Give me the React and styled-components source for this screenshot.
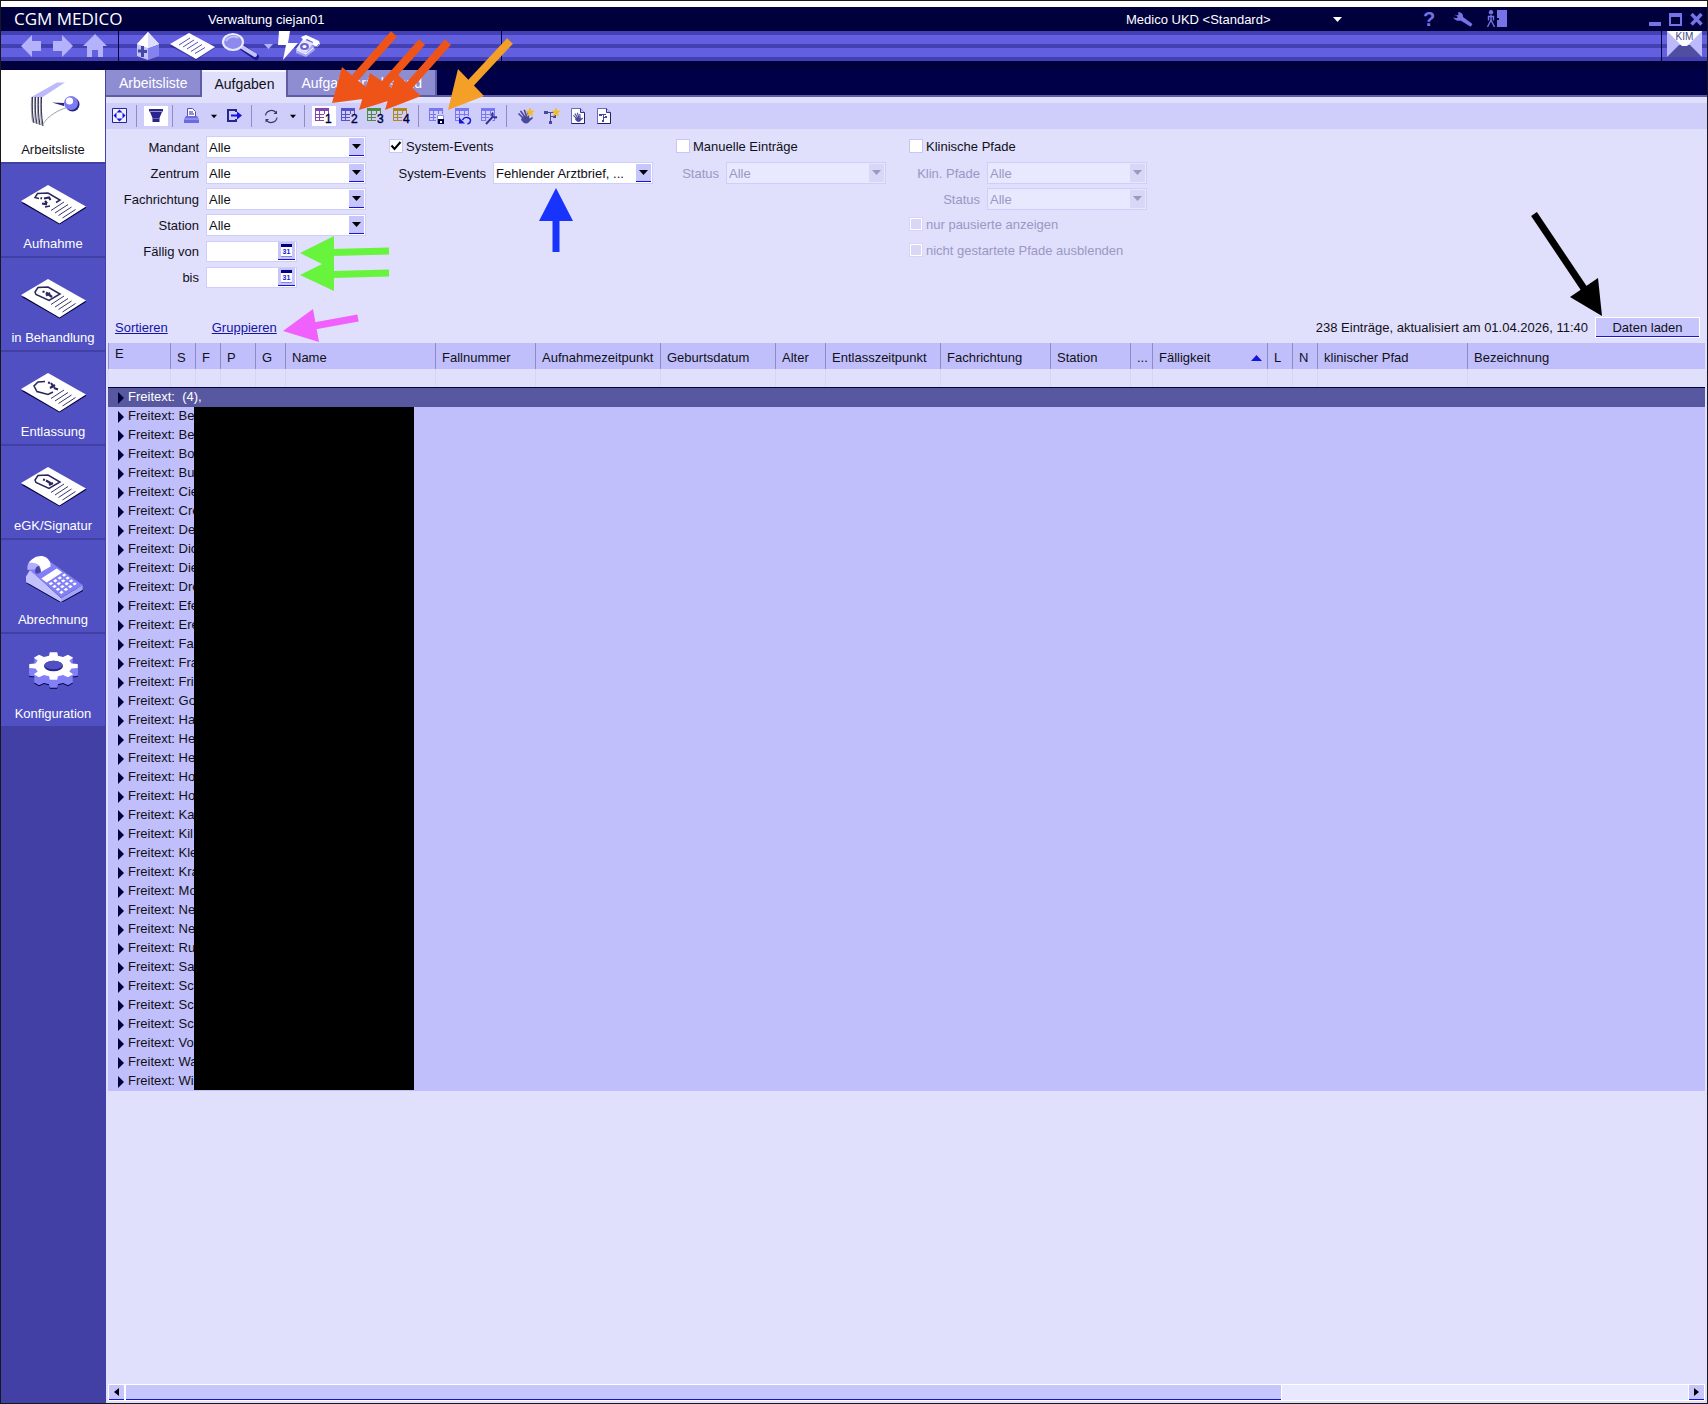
import React from "react";
import styled, { createGlobalStyle } from "styled-components";

const c = {
  frame: "#18181c",
  navy: "#00003c",
  navyTab: "#000048",
  stripeDark: "#4340b4",
  stripeLight: "#6260e0",
  side: "#5150c2",
  sideDark: "#4240a4",
  panel: "#e0dffc",
  bar: "#cfcefb",
  head: "#c0bffb",
  control: "#c7c6fc",
  selected: "#5858a0",
  tab: "#8f8dd2",
  tabEdge: "#5e5ca4",
  line: "#8f8dbe",
  faint: "#d6d5f8",
  muted: "#9a98c4",
  icon: "#7573e6",
  blue: "#1414dc",
  ink: "#101018",
};

const Global = createGlobalStyle`
  * { box-sizing: border-box; }
  body { margin: 0; background: ${c.frame}; }
  body, button, input, select {
    font-family: "Liberation Sans", Arial, sans-serif;
    font-size: 13px;
    color: ${c.ink};
  }
  button { border: 0; padding: 0; background: none; }
  svg { display: block; flex: none; }
`;

const Window = styled.div`
  position: relative;
  display: flex;
  flex-direction: column;
  height: 100vh;
  min-height: 1120px;
  border: 1px solid ${c.frame};
  background: ${c.panel};
  overflow: hidden;
`;

const TitleBar = styled.header`
  display: flex;
  align-items: center;
  height: 30px;
  padding-left: 13px;
  border-top: 6px solid #fff;
  background: ${c.navy};
  color: #fff;
  flex: none;
`;

const Brand = styled.span`
  width: 194px;
  font-family: "Open Sans", "Noto Sans", sans-serif;
  font-size: 17px;
  line-height: 24px;
`;

const User = styled.span`
  flex: 1;
`;

const Stack = styled.div`
  display: grid;
  width: ${(p) => p.$width}px;
  height: ${(p) => p.$height || 22}px;
  align-items: center;
  justify-items: end;
  & > * { grid-area: 1 / 1; }
`;

const ProfileSelect = styled.select`
  appearance: none;
  width: 100%;
  border: 0;
  padding: 0 2px;
  background: transparent;
  color: #fff;
`;

const IconGroup = styled.div`
  display: flex;
  margin-left: ${(p) => p.$space}px;
`;

const TitleButton = styled.button`
  display: flex;
  justify-content: center;
  align-items: center;
  width: ${(p) => p.$width}px;
  height: 24px;
  color: ${c.icon};
  font-size: 20px;
  font-weight: bold;
`;

const NavBar = styled.nav`
  display: flex;
  align-items: stretch;
  height: 30px;
  flex: none;
  background: linear-gradient(
    ${c.stripeDark} 4px, ${c.stripeLight} 4px 13px,
    ${c.stripeDark} 13px 17px, ${c.stripeLight} 17px 26px,
    ${c.stripeDark} 26px
  );
`;

const NavSection = styled.div`
  display: flex;
  gap: ${(p) => p.$gap || 0}px;
  width: ${(p) => p.$width}px;
  padding-left: ${(p) => p.$pad || 0}px;
  border-right: 1px solid ${c.navy};
`;

const NavButton = styled.button`
  display: flex;
  justify-content: center;
  width: ${(p) => p.$width}px;
`;

const NavFill = styled.div`
  flex: 1;
  border-right: 1px solid ${c.navy};
`;

const Body = styled.div`
  display: flex;
  flex: 1;
  min-height: 0;
  border-top: 9px solid ${c.navy};
`;

const Sidebar = styled.aside`
  width: 105px;
  flex: none;
  border-right: 1px solid ${c.sideDark};
  background: ${c.sideDark};
`;

const SideItem = styled.button`
  display: flex;
  flex-direction: column;
  align-items: center;
  gap: 10px;
  width: 104px;
  height: 92px;
  padding-top: 12px;
  margin-bottom: 2px;
  background: ${(p) => (p.$active ? "#fff" : c.side)};
  color: ${(p) => (p.$active ? c.ink : "#fff")};
  line-height: 16px;
`;

const Main = styled.main`
  display: flex;
  flex-direction: column;
  flex: 1;
  min-width: 0;
`;

const Tabs = styled.div`
  display: flex;
  height: 27px;
  flex: none;
  background: ${c.navyTab};
`;

const Tab = styled.button`
  height: 27px;
  padding: ${(p) => (p.$active ? "0 12px" : "2px 13px 0")};
  border-right: ${(p) => (p.$active ? 0 : 2)}px solid ${c.tabEdge};
  border-left: ${(p) => (p.$edge ? 2 : 0)}px solid ${c.tabEdge};
  border-bottom: ${(p) => (p.$active ? 0 : 2)}px solid ${c.tabEdge};
  border-top: ${(p) => (p.$active ? 2 : 0)}px solid #f4f4ff;
  background: ${(p) => (p.$active ? c.panel : c.tab)};
  color: ${(p) => (p.$active ? c.ink : "#fff")};
  font-size: 14px;
  line-height: 23px;
`;

const TabFill = styled.div`
  flex: 1;
  border-bottom: 2px solid ${c.tabEdge};
`;

const Toolbar = styled.div`
  display: flex;
  align-items: center;
  gap: 2px;
  height: 26px;
  margin-top: 6px;
  padding-left: 2px;
  background: ${c.bar};
  flex: none;
`;

const Tool = styled.button`
  display: flex;
  align-items: center;
  justify-content: center;
  width: ${(p) => (p.$narrow ? 15 : 24)}px;
  height: 20px;
  background: ${(p) => (p.$active ? "#fff" : "transparent")};
`;

const Divider = styled.span`
  width: 1px;
  height: 22px;
  margin: 0 5px 0 2px;
  background: ${c.line};
`;

const Filters = styled.form`
  display: flex;
  gap: 23px;
  padding: 7px 0 29px;
  flex: none;
`;

const FilterColumn = styled.fieldset`
  display: flex;
  flex-direction: column;
  gap: 4px;
  margin: 0;
  padding: 0;
  border: 0;
  min-width: 0;
`;

const Field = styled.div`
  display: flex;
  align-items: center;
  gap: 7px;
  height: 22px;
`;

const FieldLabel = styled.label`
  width: ${(p) => p.$width}px;
  text-align: right;
  white-space: nowrap;
  color: ${(p) => (p.$off ? c.muted : c.ink)};
`;

const SelectBox = styled.select`
  appearance: none;
  width: 100%;
  height: 22px;
  padding: 0 18px 0 2px;
  border: 1px solid ${c.bar};
  border-radius: 0;
  background: #fff;
  color: ${c.ink};
  opacity: 1;
  &:disabled {
    background: #e8e8fe;
    color: ${c.muted};
  }
`;

const Drop = styled.span`
  display: flex;
  align-items: center;
  justify-content: center;
  width: 15px;
  height: 18px;
  margin-right: 2px;
  pointer-events: none;
  background: ${(p) => (p.$off ? "#d8d7f6" : c.control)};
  color: ${(p) => (p.$off ? c.muted : "#000")};
  border-bottom: 1px solid ${(p) => (p.$off ? "#d8d7f6" : c.blue)};
`;

const DateInput = styled.input`
  width: 100%;
  height: 21px;
  padding: 0 20px 0 2px;
  border: 1px solid ${c.bar};
  background: #fff;
`;

const DateButton = styled.button`
  display: flex;
  justify-content: center;
  width: 17px;
  height: 18px;
  margin-right: 2px;
  background: ${c.control};
  border-bottom: 1px solid ${c.blue};
`;

const CheckRow = styled.label`
  display: flex;
  align-items: center;
  gap: 3px;
  height: 22px;
  padding-bottom: 2px;
  white-space: nowrap;
  color: ${(p) => (p.$off ? c.muted : c.ink)};
`;

const Check = styled.input`
  appearance: none;
  width: 14px;
  height: 14px;
  margin: 0;
  border: 1px solid ${c.control};
  background: #fff;
  &:disabled {
    border-color: ${c.faint};
    background: #d8d7f6;
    box-shadow: inset 0 0 0 1px #fff;
  }
`;

const ActionRow = styled.div`
  display: flex;
  align-items: center;
  gap: 44px;
  height: 26px;
  padding: 0 7px 5px 9px;
  flex: none;
`;

const TextLink = styled.a`
  color: #1414a8;
  text-decoration: underline;
`;

const LoadArea = styled.div`
  display: flex;
  align-items: center;
  gap: 7px;
  margin-left: auto;
`;

const LoadButton = styled.button`
  width: 105px;
  height: 21px;
  border: 1px solid #fff;
  background: ${c.control};
  box-shadow: inset 0 -1px 0 ${c.blue};
`;

const TableArea = styled.section`
  position: relative;
  flex: 1;
  min-height: 0;
  margin: 0 2px;
`;

const Table = styled.table`
  width: 100%;
  table-layout: fixed;
  border-collapse: separate;
  border-spacing: 0;
`;

const HeadCell = styled.th`
  height: 26px;
  padding: ${(p) => (p.$high ? "0 0 2px 6px" : "4px 0 0 6px")};
  border-left: 1px solid ${c.line};
  background: ${c.head};
  font-weight: normal;
  line-height: 22px;
  text-align: left;
  vertical-align: top;
  white-space: nowrap;
  overflow: hidden;
`;

const HeadInner = styled.span`
  display: flex;
  align-items: center;
  justify-content: space-between;
  padding-right: 5px;
`;

const BlankCell = styled.td`
  height: 18px;
  padding: 0;
  border-left: 1px solid ${c.faint};
`;

const GroupCell = styled.td`
  padding: 0;
  border-top: ${(p) => (p.$selected ? 1 : 0)}px solid ${c.navy};
  background: ${(p) => (p.$selected ? c.selected : c.head)};
`;

const GroupButton = styled.button`
  display: flex;
  gap: 4px;
  width: 100%;
  height: 19px;
  padding: 0 0 2px 10px;
  color: ${(p) => (p.$selected ? "#fff" : c.ink)};
  line-height: 17px;
  text-align: left;
  white-space: pre;
`;

const Redaction = styled.div`
  position: absolute;
  left: 86px;
  top: 64px;
  width: 220px;
  height: 683px;
  background: #000;
`;

const ScrollBar = styled.div`
  display: flex;
  gap: 1px;
  height: 17px;
  margin: 0 2px 2px;
  border: 1px solid #fff;
  background: #fff;
  flex: none;
`;

const ScrollButton = styled.button`
  display: flex;
  align-items: center;
  justify-content: center;
  width: 15px;
  background: ${c.control};
  border-bottom: 1px solid ${c.blue};
`;

const ScrollTrack = styled.div`
  flex: 1;
  background: #e8e8fe;
`;

const ScrollThumb = styled.div`
  width: 74%;
  height: 100%;
  background: ${c.control};
  border-left: 1px solid #fff;
  border-right: 1px solid #fff;
  box-shadow: inset 0 -1px 0 ${c.blue};
`;

const Marks = styled.svg`
  position: absolute;
  top: 0;
  ${(p) => (p.$right ? "right: 0;" : "left: 0;")}
  pointer-events: none;
`;

/* ---------- small glyphs ---------- */

const Caret = ({ color = "currentColor", w = 9 }) => (
  <svg width={w} height="5" viewBox="0 0 9 5">
    <path d="M0 0h9L4.500 5z" fill={color} />
  </svg>
);

const Grid = ({ color, children }) => (
  <svg width="18" height="20" viewBox="0 -2 18 20">
    <g shapeRendering="crispEdges" fill={color}>
      <path d="M0 0h14v3H0zM0 3h1v10H0zM4 3h1v10H4zM9 3h1v10H9zM13 3h1v10h-1zM0 6h14v1H0zM0 9h14v1H0zM0 12h14v1H0z" />
    </g>
    {children}
  </svg>
);

const NumberedGrid = ({ color, n, bg }) => (
  <Grid color={color}>
    <path d="M9 6h8v11H9z" fill={bg} />
    <text x="10" y="15" fontSize="12" fill={c.navy} stroke={c.navy} strokeWidth=".4">{n}</text>
  </Grid>
);

const Star = ({ x, y }) => (
  <path transform={`translate(${x} ${y})`} d="M4 0l1 3 3 .2L5.600 5l1 3L4 6.200 1.400 8l1-3L0 3.200 3 3z" fill="#f0bc28" stroke="#f0bc28" strokeWidth=".8" />
);

const Hand = () => (
  <g stroke="#4a489c" strokeWidth="1.700" strokeLinecap="round" fill="none">
    <path d="M5 10L1 6M6.500 8.500L3 3.500M8.500 8L6.500 2.500M10.500 9L10 4M11 12.500l3-2.500" />
    <path d="M4 9.500c3-2.500 7-1.500 8 1.500 0 3-2 4.500-4 4.500s-4-2-5-4z" fill="#4a489c" stroke="none" />
  </g>
);

const Tree = () => (
  <g fill="#4a489c" shapeRendering="crispEdges">
    <path d="M0 3h4v3H0zM4 4h6v1H4zM6 5h1v8H6zM7 8h2v1H7zM9 7h3v3H9zM5 13h3v3H5z" />
  </g>
);

const Page = ({ children }) => (
  <svg width="16" height="16" viewBox="0 0 16 16">
    <path d="M1.500.5h9l4 4v11h-13z" fill="#fff" stroke="#6c6ab8" />
    <path d="M14.500 4.500v11h-13" fill="none" stroke="#20206c" />
    <path d="M10.500.5v4h4" fill={c.head} stroke="#34329c" />
    <g transform="translate(3 3.500) scale(.68)">{children}</g>
  </svg>
);

const ExpandIcon = () => (
  <svg width="16" height="16" viewBox="0 0 16 16">
    <path d="M.5.5h14v14H.5z" fill="#eeeeff" stroke="#28268c" />
    <path d="M7.500 1.500l3 3h-6zM7.500 13.500l3-3h-6zM1.500 7.500l3-3v6zM13.500 7.500l-3-3v6z" fill={c.blue} />
  </svg>
);

const FilterIcon = () => (
  <svg width="14" height="14" viewBox="0 0 14 14">
    <path d="M0 0h14v2.500H0zM1 3h12l-2.500 6v4h-7V9z" fill="#28268c" />
    <path d="M3 9.500h8" stroke="#8c8ad0" strokeWidth=".6" />
  </svg>
);

const PrinterIcon = () => (
  <svg width="16" height="16" viewBox="0 0 16 16">
    <path d="M3.500 8V.5h5l3 3V8" fill="#fff" stroke="#5452c0" />
    <path d="M5 4h4M5 6h5" stroke="#28268c" />
    <path d="M2 8h11l2 3v4H0v-4z" fill="#6c6ae0" />
    <path d="M0 11h15" stroke="#b4b2fa" />
  </svg>
);

const ExportIcon = () => (
  <svg width="16" height="14" viewBox="0 0 16 14">
    <path d="M9 3V1H1v11h8v-2" fill="none" stroke="#28268c" strokeWidth="2" />
    <path d="M4 5.500h6V2.500l5 4-5 4V7.500H4z" fill={c.blue} />
  </svg>
);

const RefreshIcon = () => (
  <svg width="15" height="15" viewBox="0 0 15 15">
    <path d="M1.500 6.500C2 2 8-.5 12 3.500M13 8.500c-.5 4.500-6.500 7-10.500 3" fill="none" stroke="#3a3a60" strokeWidth="1.200" />
    <path d="M13 1.500v3.500H9.500zM1.500 13.500V10H5z" fill="#3a3a60" />
  </svg>
);

const Wrench = ({ color, size }) => (
  <svg width={size} height={size * 0.75} viewBox="0 0 20 15">
    <path d="M1 2.500l3 1 1.500-1L5 .3C8 0 10.500 2 10 5l9.500 7-1.800 2.700L7.500 8.500C4 9.500.5 7 .5 5.500l3 .7L5 5z" fill={color} />
  </svg>
);

const ExitIcon = () => (
  <svg width="22" height="18" viewBox="0 0 22 18">
    <circle cx="5" cy="2.300" r="2.200" fill={c.icon} />
    <path d="M5 5v6M2.500 10.500V6.500h5v4M5 10l-3.500 7M5 10l3.500 7" stroke={c.icon} strokeWidth="1.400" fill="none" />
    <path d="M11 0h10v17H11z" fill={c.icon} />
    <path d="M11 8h2v2h-2z" fill={c.navy} />
  </svg>
);

const ArrowGlyph = ({ flip }) => (
  <svg width="20" height="30" viewBox="0 0 20 30">
    <path transform={flip ? "translate(20 0) scale(-1 1)" : undefined} d="M0 15L11 4v6h9v10h-9v6z" fill="#b4b2fa" />
  </svg>
);

const HomeGlyph = () => (
  <svg width="24" height="30" viewBox="0 0 24 30">
    <path d="M12 3l12 12h-4v11h-5v-7H9v7H4V15H0z" fill="#b4b2fa" />
  </svg>
);

const ClinicGlyph = () => (
  <svg width="29" height="30" viewBox="0 0 29 30">
    <path d="M1 13L12 1v28L1 25z" fill="#c4c2fc" />
    <path d="M12 1l11 12v12l-11 4z" fill="#8482ec" />
    <path d="M12 1L1 13l11 4 11-4z" fill="#fff" />
    <path d="M12 1l11 12-11 4z" fill="#dedcff" />
    <path d="M5 15h3v4h3v3H8v4H5v-4.500H2v-3h3z" fill="#4644a4" />
  </svg>
);

const SheetGlyph = () => (
  <svg width="48" height="30" viewBox="0 0 48 30">
    <path d="M1 15L20 3l26 14-19 12z" fill={c.navy} opacity=".35" />
    <path d="M1 13L20 2l26 14-19 12z" fill="#fff" />
    <path d="M10 14l11-7M14 16l11-7M18 18l11-7M22 20.500l11-7M26 22.500l10-6" stroke="#5452b4" />
  </svg>
);

const LensGlyph = () => (
  <svg width="39" height="30" viewBox="0 0 39 30">
    <path d="M22 17l13 9" stroke="#1c1a90" strokeWidth="6" strokeLinecap="round" />
    <path d="M21 16l13 8" stroke="#c4c2fc" strokeWidth="4" strokeLinecap="round" />
    <ellipse cx="12" cy="11" rx="10" ry="8" fill="#8c8aec" stroke="#e8e8ff" strokeWidth="2.200" />
    <path d="M5 10c2-4 8-6 12-3" stroke="#c4c2fc" strokeWidth="2" fill="none" />
  </svg>
);

const BoltPhoneGlyph = () => (
  <svg width="42" height="30" viewBox="0 0 42 30">
    <path d="M1 0h11l-2 12h10L5 29l3-15H0z" fill="#fff" />
    <path d="M25 9l10 4 2 6-9 7-10-4v-3z" fill="#a8a6f8" />
    <path d="M25 8l10 4-7 10-10-4z" fill="#e8e6ff" />
    <path d="M23 6l5-2 13 6 1 3-3 3-5-2 1-3-6-3-3 2z" fill="#fff" />
    <path d="M41 13l-3 3-4-2" stroke="#8482ec" fill="none" />
    <ellipse cx="26.500" cy="15.500" rx="4.500" ry="3.500" fill="#6a68cc" />
    <ellipse cx="26.500" cy="15.500" rx="2" ry="1.500" fill="#fff" />
    <path d="M19 19l9 4 7-6" stroke="#fff" fill="none" />
  </svg>
);

const MailGlyph = () => (
  <svg width="36" height="30" viewBox="0 0 36 30">
    <path d="M0 0h35v26H0z" fill="#bcbafa" />
    <path d="M0 26l12-12h11l12 12z" fill="#504ea0" />
    <path d="M0 0h35L20 15h-5z" fill="#fff" />
    <text x="17.500" y="9" textAnchor="middle" fontSize="10" fill="#46448c">KIM</text>
  </svg>
);

const CalendarGlyph = () => (
  <svg width="13" height="16" viewBox="0 0 13 16">
    <path d="M1 2h11v12H1z" fill="#fff" />
    <path d="M1 2h11v3H1z" fill="#000080" />
    <path d="M1 14.500h11" stroke="#8482ec" />
    <text x="6.500" y="12" textAnchor="middle" fontSize="7" fontWeight="bold" fill={c.blue}>31</text>
  </svg>
);

/* ---------- sidebar drawings ---------- */

const SideSvg = ({ children }) => (
  <svg width="70" height="50" viewBox="0 0 70 50">{children}</svg>
);

const ListDrawing = () => (
  <SideSvg>
    <path d="M12.500 15.500L39 .5h8l-23 15z" fill="#bcbafa" />
    {[13, 16, 19, 22].map((x, i) => (
      <g key={x}>
        <path d={`M${x} 15c-.5 10 0 18 1 ${25 + i}l2 1c-2-8-1.500-17-1-${26 + i}z`} fill="#a4a4bc" />
        <path d={`M${x + 1.5} 15c-.5 10-.2 18 1.500 ${26 + i}`} stroke="#303048" fill="none" />
      </g>
    ))}
    <path d="M25 42C30 34 40 28 49 25.500" stroke="#a0a0a8" fill="none" />
    <path d="M34 20.500l12 .5v3z" fill="#28267c" />
    <circle cx="54.500" cy="22.500" r="7" fill="#28267c" />
    <circle cx="53" cy="21" r="7" fill="#7c7af4" />
    <circle cx="51.500" cy="19" r="3.600" fill="#fff" />
  </SideSvg>
);

const figures = {
  aufnahme: (
    <>
      <path d="M21 22.500l-4-1 2.500-4L30 17l12 7-4 2.500M27 31l5-1" />
      <path d="M22.500 22l1.500.5M26 22.500l5-1 1.500 2.500M24 27.500l5 1M27 25l2 2.500" strokeWidth="2.200" />
    </>
  ),
  behandlung: (
    <>
      <path d="M17 22l3-4.500 10-.5 12 7-11 6.500-13-6z" />
      <path d="M24.500 21.500l2 .5M28 22.500l6 4.500M28 25.500l4-2.500" strokeWidth="2.200" />
    </>
  ),
  entlassung: (
    <>
      <path d="M27 17.500l-7 .5-4 4 3 5.500 11 3 5-2.500" />
      <path d="M30 18.500l2 .5M33 19l3 4.500M32 24l5-3M36 24l4 1.500" strokeWidth="2.200" />
    </>
  ),
  signatur: (
    <>
      <path d="M17 22l3-4.500 10-.5 12 7-11 6.500-13-6z" />
      <path d="M25 21.500l2 .5M28 22.500l6 3.500M31 27l4-2" strokeWidth="2.200" />
    </>
  ),
};

const CardDrawing = ({ kind }) => (
  <SideSvg>
    <path d="M3 26.500l38.500 22L68 32v-1z" fill={c.navy} />
    <path d="M30 9l38 21.500L41.500 47.500 3 25z" fill="#fff" />
    <g stroke="#28265c" fill="none" strokeWidth="1.500">{figures[kind]}</g>
    <path d="M33 34.500l13-8.500M37 37l13-8.500M40.500 39.500l13-8.500M44.500 42l13-8.500" stroke="#38366c" />
  </SideSvg>
);

const keys = [0, 1, 2, 3].flatMap((a) => [0, 1, 2, 3].map((b) => [32.7 + a * 4.4 + b * 3.5, 31.5 - a * 2.8 + b * 2.9]));

const CalculatorDrawing = () => (
  <SideSvg>
    <path d="M8 31l35 20 22-12v-2z" fill={c.navy} />
    <path d="M12 18l31 28v4L8 30v-5.500z" fill="#c4c2fc" />
    <path d="M43 46l21.700-13v5L43 50z" fill="#a4a2fa" />
    <path d="M12 18l20-8.500L64.700 33 43 46z" fill="#8280f6" />
    <path d="M23.300 26.500l15.400-10 5.600 4L28.700 30.500z" fill="#fff" />
    {keys.map(([x, y], i) => (
      <path key={i} d={`M${x - 2} ${y}l2.500-1.600 2 1.600-2.500 1.700z`} fill="#fff" />
    ))}
    <path d="M9.500 18c-1-7 3-11 8-10 3 1 4 5 3 9z" fill="#b0aefa" />
    <path d="M11 11C14 6 20 3 26 4.500c5 2 7 6 6.500 10L23 20c0-6-3-10-12-9z" fill="#fff" />
    <path d="M17 20c0-4 1.500-6 4-6l2 6-4 2z" fill="#4644a4" />
  </SideSvg>
);

const gearPath = (dy) => {
  const pts = [];
  for (let i = 0; i < 8; i += 1) {
    const mid = (i * Math.PI) / 4;
    [[-0.24, 18.5], [-0.15, 24.5], [0.15, 24.5], [0.24, 18.5]].forEach(([o, r]) => {
      pts.push(`${(35.5 + Math.cos(mid + o) * r).toFixed(1)} ${(20 + dy + Math.sin(mid + o) * r * 0.57).toFixed(1)}`);
    });
  }
  return `M${pts.join("L")}z`;
};

const GearDrawing = () => (
  <SideSvg>
    <path d={gearPath(9)} fill={c.navy} />
    {[8, 7, 6, 5, 4, 3, 2, 1].map((dy) => <path key={dy} d={gearPath(dy)} fill="#8280f6" />)}
    <path d={gearPath(0)} fill="#fff" />
    <ellipse cx="35.500" cy="20" rx="9.500" ry="5.300" fill="#28268c" />
    <ellipse cx="35.500" cy="19" rx="9" ry="4.300" fill={c.side} />
  </SideSvg>
);

/* ---------- data ---------- */

const sideItems = [
  ["Arbeitsliste", <ListDrawing />],
  ["Aufnahme", <CardDrawing kind="aufnahme" />],
  ["in Behandlung", <CardDrawing kind="behandlung" />],
  ["Entlassung", <CardDrawing kind="entlassung" />],
  ["eGK/Signatur", <CardDrawing kind="signatur" />],
  ["Abrechnung", <CalculatorDrawing />],
  ["Konfiguration", <GearDrawing />],
];

const columns = [
  ["E", 62], ["S", 25], ["F", 25], ["P", 35], ["G", 30], ["Name", 150],
  ["Fallnummer", 100], ["Aufnahmezeitpunkt", 125], ["Geburtsdatum", 115],
  ["Alter", 50], ["Entlasszeitpunkt", 115], ["Fachrichtung", 110],
  ["Station", 80], ["...", 22], ["Fälligkeit", 115], ["L", 25], ["N", 25],
  ["klinischer Pfad", 150], ["Bezeichnung", null],
];

const groups = [
  "Be", "Be", "Bo", "Bu", "Cie", "Cre", "De", "Dic", "Die", "Dre", "Efe", "Ere",
  "Fa", "Fra", "Fri", "Go", "Ha", "He", "He", "Ho", "Ho", "Ka", "Kil", "Kle",
  "Kra", "Mo", "Ne", "Ne", "Ru", "Sa", "Sc", "Sc", "Sc", "Vo", "Wa", "Wi",
];

/* ---------- composed parts ---------- */

const SelectField = ({ id, label, labelWidth, value = "Alle", off }) => (
  <Field>
    <FieldLabel htmlFor={id} $width={labelWidth} $off={off}>{label}</FieldLabel>
    <Stack $width={160}>
      <SelectBox id={id} disabled={off}>
        <option>{value}</option>
      </SelectBox>
      <Drop $off={off}><Caret /></Drop>
    </Stack>
  </Field>
);

const DateField = ({ id, label }) => (
  <Field>
    <FieldLabel htmlFor={id} $width={93}>{label}</FieldLabel>
    <Stack $width={91} $height={21}>
      <DateInput id={id} type="text" />
      <DateButton type="button" aria-label={`${label} wählen`}><CalendarGlyph /></DateButton>
    </Stack>
  </Field>
);

const TickBox = styled.span`
  display: grid;
  & > * { grid-area: 1 / 1; }
  & > svg { visibility: hidden; pointer-events: none; }
  & > input:checked + svg { visibility: visible; }
`;

const CheckField = ({ label, checked, off }) => (
  <CheckRow $off={off}>
    <TickBox>
      <Check type="checkbox" defaultChecked={checked} disabled={off} />
      <svg width="14" height="14" viewBox="0 0 14 14">
        <path d="M2.500 6.500l3 3.500 6-7" fill="none" stroke="#000" strokeWidth="2" />
      </svg>
    </TickBox>
    {label}
  </CheckRow>
);

const GroupRow = ({ text, selected }) => (
  <tr>
    <GroupCell colSpan={columns.length} $selected={selected}>
      <GroupButton type="button" $selected={selected}>
        <svg width="6" height="17" viewBox="0 0 6 17">
          <path d="M0 4l6 6-6 6z" fill={c.navy} />
        </svg>
        {text}
      </GroupButton>
    </GroupCell>
  </tr>
);

export default function App() {
  return (
    <>
      <Global />
      <Window>
        <TitleBar>
          <Brand>CGM MEDICO</Brand>
          <User>Verwaltung ciejan01</User>
          <Stack $width={218}>
            <ProfileSelect aria-label="Profil"><option>Medico UKD &lt;Standard&gt;</option></ProfileSelect>
            <Caret color="#fff" />
          </Stack>
          <IconGroup $space={70}>
            <TitleButton $width={34} aria-label="Hilfe">?</TitleButton>
            <TitleButton $width={34} aria-label="Werkzeuge"><Wrench color={c.icon} size={20} /></TitleButton>
            <TitleButton $width={34} aria-label="Abmelden"><ExitIcon /></TitleButton>
          </IconGroup>
          <IconGroup $space={130}>
            <TitleButton $width={21} aria-label="Minimieren">
              <svg width="12" height="14" viewBox="0 0 12 14"><path d="M0 10h12v4H0z" fill={c.icon} /></svg>
            </TitleButton>
            <TitleButton $width={21} aria-label="Maximieren">
              <svg width="13" height="14" viewBox="0 0 13 14"><path d="M0 1h13v13H0zM2 5v7h9V5z" fillRule="evenodd" fill={c.icon} /></svg>
            </TitleButton>
            <TitleButton $width={21} aria-label="Schließen">
              <svg width="13" height="14" viewBox="0 0 13 14"><path d="M1.500 2l10 10.500M11.500 2l-10 10.500" stroke={c.icon} strokeWidth="3.400" /></svg>
            </TitleButton>
          </IconGroup>
        </TitleBar>

        <NavBar>
          <NavSection $width={118} $pad={14}>
            <NavButton $width={32} aria-label="Zurück"><ArrowGlyph /></NavButton>
            <NavButton $width={32} aria-label="Vor"><ArrowGlyph flip /></NavButton>
            <NavButton $width={32} aria-label="Start"><HomeGlyph /></NavButton>
          </NavSection>
          <NavSection $width={383} $pad={17} $gap={4}>
            <NavButton $width={29} aria-label="Klinik"><ClinicGlyph /></NavButton>
            <NavButton $width={48} aria-label="Dokument"><SheetGlyph /></NavButton>
            <NavButton $width={39} aria-label="Suche"><LensGlyph /></NavButton>
            <NavButton $width={10} aria-label="Suchoptionen">
              <svg width="10" height="30" viewBox="0 0 10 30"><path d="M0 13h9l-4.500 5z" fill="#b4b2fa" /></svg>
            </NavButton>
            <NavButton $width={42} aria-label="Notfall"><BoltPhoneGlyph /></NavButton>
          </NavSection>
          <NavFill />
          <NavButton $width={45} aria-label="KIM"><MailGlyph /></NavButton>
        </NavBar>

        <Body>
          <Sidebar>
            {sideItems.map(([label, drawing], i) => (
              <SideItem key={label} $active={i === 0}>
                {drawing}
                {label}
              </SideItem>
            ))}
          </Sidebar>

          <Main>
            <Tabs>
              <Tab>Arbeitsliste</Tab>
              <Tab $active>Aufgaben</Tab>
              <Tab $edge>Aufgabenrückstand</Tab>
              <TabFill />
            </Tabs>

            <Toolbar>
              <Tool aria-label="Vollbild"><ExpandIcon /></Tool>
              <Divider />
              <Tool $active aria-label="Filter"><FilterIcon /></Tool>
              <Divider />
              <Tool aria-label="Drucken"><PrinterIcon /></Tool>
              <Tool $narrow aria-label="Druckoptionen"><Caret color="#000" w={6} /></Tool>
              <Tool aria-label="Export"><ExportIcon /></Tool>
              <Divider />
              <Tool aria-label="Aktualisieren"><RefreshIcon /></Tool>
              <Tool $narrow aria-label="Intervall"><Caret color="#000" w={6} /></Tool>
              <Divider />
              <Tool $active aria-label="Ansicht 1"><NumberedGrid color="#8048b0" n="1" bg="#fff" /></Tool>
              <Tool aria-label="Ansicht 2"><NumberedGrid color="#5452c4" n="2" bg={c.bar} /></Tool>
              <Tool aria-label="Ansicht 3"><NumberedGrid color="#4c8c3c" n="3" bg={c.bar} /></Tool>
              <Tool aria-label="Ansicht 4"><NumberedGrid color="#b08820" n="4" bg={c.bar} /></Tool>
              <Divider />
              <Tool aria-label="Ansicht speichern">
                <Grid color="#7a78f0">
                  <path d="M7 6h9v11H7z" fill={c.bar} />
                  <path d="M8.500 7.500h6v8h-6z" fill="#fff" stroke="#8c8ae0" />
                  <path d="M9 11h6v5H9z" fill={c.navy} />
                  <path d="M11 13h2v2h-2z" fill="#fff" />
                </Grid>
              </Tool>
              <Tool aria-label="Ansicht zurücksetzen">
                <Grid color="#7a78f0">
                  <path d="M5 8h11v8H5z" fill={c.bar} />
                  <path d="M7.500 12c2-4 8-3 8 .5 0 2-1 3-3 3.500" fill="none" stroke={c.blue} strokeWidth="1.400" />
                  <path d="M4 9.500v6h6z" fill={c.blue} />
                </Grid>
              </Tool>
              <Tool aria-label="Ansicht bearbeiten">
                <Grid color="#7a78f0">
                  <path d="M5 16l6.500-7" fill="none" stroke={c.bar} strokeWidth="4.500" />
                  <path d="M5 16l6.500-7M12 4.500c-2 3 0 6 4 4.500" fill="none" stroke="#34329c" strokeWidth="2" />
                </Grid>
              </Tool>
              <Divider />
              <Tool aria-label="Neuer Eintrag">
                <svg width="17" height="17" viewBox="0 0 17 17"><Hand /><Star x={8} y={0} /></svg>
              </Tool>
              <Tool aria-label="Neuer Pfad">
                <svg width="17" height="17" viewBox="0 0 17 17"><Tree /><Star x={8} y={0} /></svg>
              </Tool>
              <Tool aria-label="Eintrag öffnen"><Page><Hand /></Page></Tool>
              <Tool aria-label="Pfad öffnen"><Page><Tree /></Page></Tool>
            </Toolbar>

            <Filters>
              <FilterColumn>
                <SelectField id="mandant" label="Mandant" labelWidth={93} />
                <SelectField id="zentrum" label="Zentrum" labelWidth={93} />
                <SelectField id="fach" label="Fachrichtung" labelWidth={93} />
                <SelectField id="station" label="Station" labelWidth={93} />
                <DateField id="von" label="Fällig von" />
                <DateField id="bis" label="bis" />
              </FilterColumn>
              <FilterColumn>
                <CheckField label="System-Events" checked />
                <SelectField id="events" label="System-Events" labelWidth={97} value="Fehlender Arztbrief, ..." />
              </FilterColumn>
              <FilterColumn>
                <CheckField label="Manuelle Einträge" />
                <SelectField id="mstatus" label="Status" labelWidth={43} off />
              </FilterColumn>
              <FilterColumn>
                <CheckField label="Klinische Pfade" />
                <SelectField id="pfade" label="Klin. Pfade" labelWidth={71} off />
                <SelectField id="pstatus" label="Status" labelWidth={71} off />
                <CheckField label="nur pausierte anzeigen" off />
                <CheckField label="nicht gestartete Pfade ausblenden" off />
              </FilterColumn>
            </Filters>

            <ActionRow>
              <TextLink href="#sortieren">Sortieren</TextLink>
              <TextLink href="#gruppieren">Gruppieren</TextLink>
              <LoadArea>
                <span>238 Einträge, aktualisiert am 01.04.2026, 11:40</span>
                <LoadButton>Daten laden</LoadButton>
              </LoadArea>
            </ActionRow>

            <TableArea>
              <Table>
                <colgroup>
                  {columns.map(([name, width]) => <col key={name} width={width || undefined} />)}
                </colgroup>
                <thead>
                  <tr>
                    {columns.map(([name]) => (
                      <HeadCell key={name} $high={name === "E"}>
                        {name === "Fälligkeit" ? (
                          <HeadInner>
                            {name}
                            <svg width="11" height="6" viewBox="0 0 11 6"><path d="M0 6l5.500-6L11 6z" fill={c.blue} /></svg>
                          </HeadInner>
                        ) : name}
                      </HeadCell>
                    ))}
                  </tr>
                </thead>
                <tbody>
                  <tr>{columns.map(([name]) => <BlankCell key={name} />)}</tr>
                  <GroupRow selected text="Freitext:  (4)," />
                  {groups.map((name, i) => <GroupRow key={i} text={`Freitext: ${name}`} />)}
                </tbody>
              </Table>
              <Redaction />
            </TableArea>

            <ScrollBar>
              <ScrollButton aria-label="Nach links">
                <svg width="5" height="8" viewBox="0 0 5 8"><path d="M5 0v8L0 4z" /></svg>
              </ScrollButton>
              <ScrollTrack><ScrollThumb /></ScrollTrack>
              <ScrollButton aria-label="Nach rechts">
                <svg width="5" height="8" viewBox="0 0 5 8"><path d="M0 0v8l5-4z" /></svg>
              </ScrollButton>
            </ScrollBar>
          </Main>
        </Body>

        <Marks width="600" height="360" viewBox="1 1 600 360">
          <g stroke="#ee5418" fill="#ee5418" strokeWidth="8">
            <path d="M394 34L355 78M422 42L382 87M448 42L408 87" />
            <path stroke="none" d="M332 103l10-36 36 30zM359 110l11-37 34 23zM385 110l11-37 25 23z" />
          </g>
          <path d="M510 41L468 86" stroke="#f4a028" strokeWidth="8" />
          <path d="M448 110l10-41 26 27z" fill="#f4a028" />
          <g stroke="#68f43c" fill="#68f43c" strokeWidth="7">
            <path d="M389 251l-57 1.500M389 273l-57 1.500" />
            <path stroke="none" d="M300 253l34-17v34zM300 275l34-17v33z" />
          </g>
          <path d="M556 252v-34" stroke="#1834fc" strokeWidth="7" />
          <path d="M556 188l-17 33h34z" fill="#1834fc" />
          <path d="M358 318l-44 8" stroke="#f060fc" strokeWidth="7" />
          <path d="M283 331l30-22 6 33z" fill="#f060fc" />
        </Marks>
        <Marks $right width="200" height="360" viewBox="1507 1 200 360">
          <path d="M1534 214l51 76" stroke="#000" strokeWidth="7" />
          <path d="M1602 316l-4-38-28 19z" />
        </Marks>
      </Window>
    </>
  );
}
